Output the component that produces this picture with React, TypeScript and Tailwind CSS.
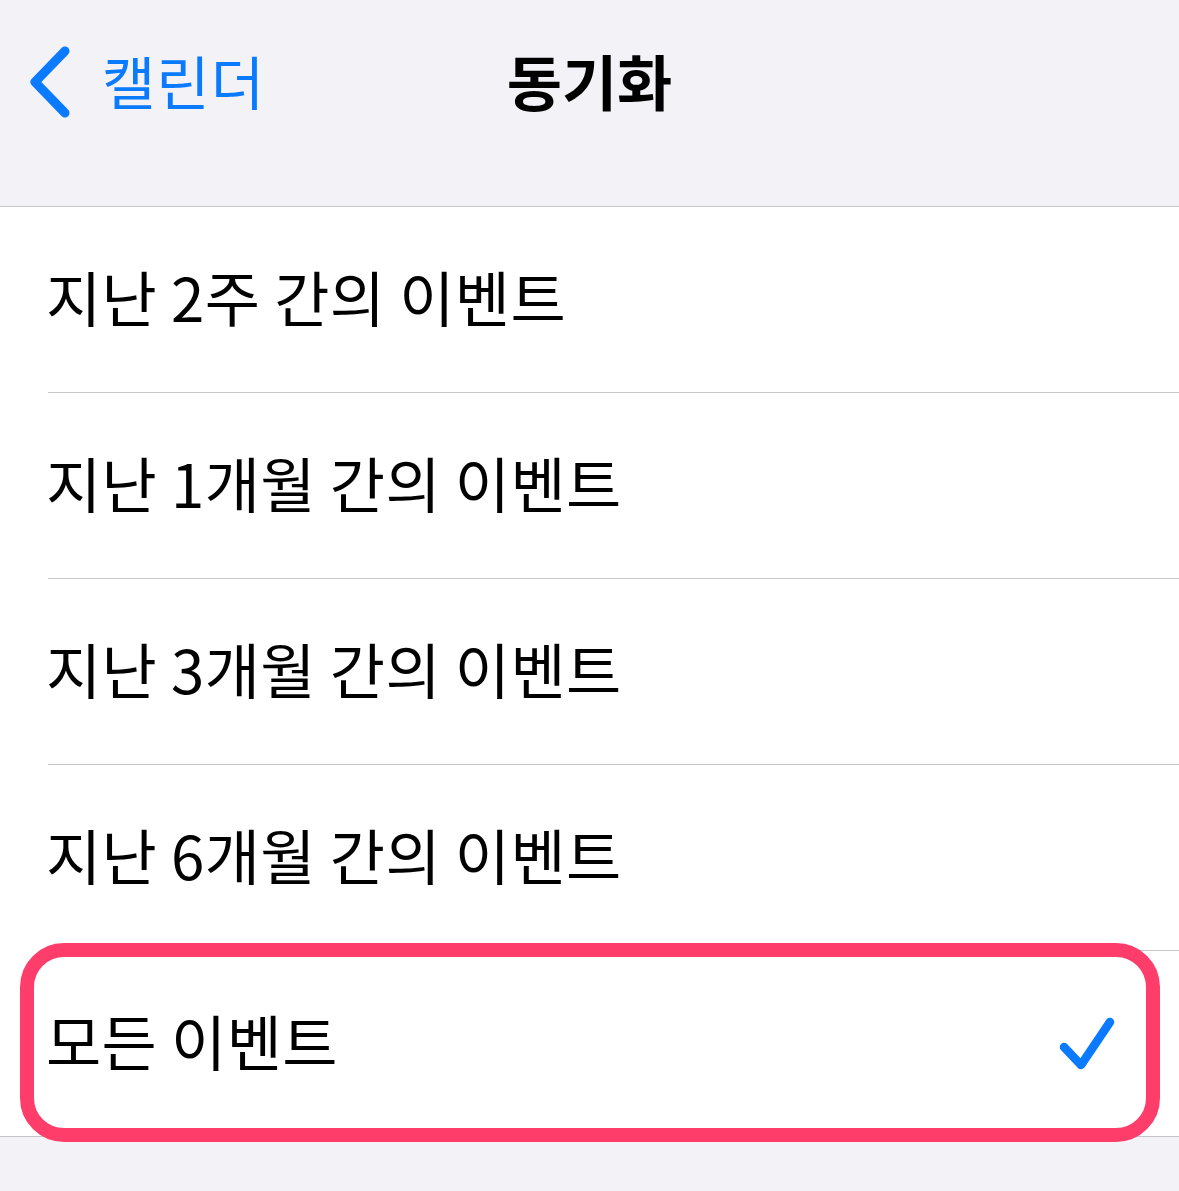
import React from 'react';

const font = { fontFamily: '"Noto Sans CJK KR", "Noto Sans", sans-serif' };

// 동기화 옵션 목록
const options = [
    '지난 2주 간의 이벤트',
    '지난 1개월 간의 이벤트',
    '지난 3개월 간의 이벤트',
    '지난 6개월 간의 이벤트',
    '모든 이벤트',
];

function Chevron() {
    return (
        <svg width="44" height="72" viewBox="0 0 44 72" fill="none">
            <path d="M37 5 L7 36 L37 67" stroke="#0a7aff" strokeWidth="9" strokeLinecap="round" strokeLinejoin="round" />
        </svg>
    );
}

function Check() {
    return (
        <svg width="64" height="56" viewBox="0 0 64 56" fill="none">
            <path d="M11 31 L28 49 L57 6" stroke="#0a7aff" strokeWidth="8.5" strokeLinecap="round" strokeLinejoin="round" />
        </svg>
    );
}

export default function App() {
    const selected = options.length - 1;

    return (
        <div className="w-[1179px] h-[1191px] bg-[#f2f2f7] overflow-hidden" style={font}>
            {/* 상단 내비게이션 */}
            <div className="h-[207px] border-b border-[#c6c6c8] relative">
                <div className="absolute left-[28px] top-[46px] flex items-center gap-[30px]">
                    <Chevron />
                    <span className="text-[58px] text-[#0a7aff] leading-none tracking-[1px] -mt-[4px]">캘린더</span>
                </div>
                <div className="h-[160px] flex items-center justify-center">
                    <span className="text-[60px] font-bold text-black leading-none">동기화</span>
                </div>
            </div>

            <div className="bg-white border-b border-[#c6c6c8]">
                {options.map((label, i) => (
                    <div key={label} className="pl-[48px]">
                        <div
                            className={`flex items-center pr-[62px] relative ${i < options.length - 1 ? 'border-b border-[#c6c6c8] h-[186px]' : 'h-[185px]'}`}
                        >
                            <span className="text-[60px] text-black leading-none flex-1 -ml-[2px] tracking-[0.4px] pb-[8px]">{label}</span>
                            {i === selected && <Check />}
                            {i === selected && (
                                <div className="absolute left-[-28px] right-[19px] top-[-8px] bottom-[-6px] border-[14px] border-[#ff3d6b] rounded-[44px] pointer-events-none" />
                            )}
                        </div>
                    </div>
                ))}
            </div>
        </div>
    );
}
